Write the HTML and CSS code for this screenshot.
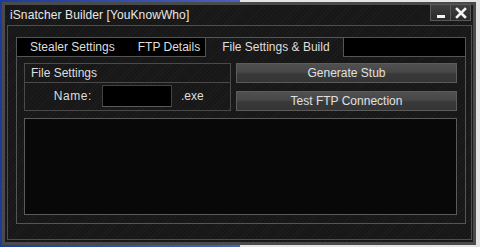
FILE: index.html
```html
<!DOCTYPE html>
<html lang="en">
<head>
  <meta charset="UTF-8" />
  <meta name="viewport" content="width=device-width, initial-scale=1.0"/>
  <title>iSnatcher Builder</title>
  <link rel="stylesheet" href="styles.css">
</head>
<body>
  <div class="window">
    <div class="titlebar">
      <span class="title">iSnatcher Builder [YouKnowWho]</span>
      <div class="controls">
        <button class="ctl" title="Minimize">
          <svg width="10" height="10" viewBox="0 0 10 10"><rect x="1" y="7" width="8" height="3" fill="#f2f2f2"/></svg>
        </button>
        <button class="ctl" title="Close">
          <svg width="12" height="12" viewBox="0 0 12 12"><path d="M2 2 L10 10 M10 2 L2 10" stroke="#f2f2f2" stroke-width="2.6" stroke-linecap="square"/></svg>
        </button>
      </div>
    </div>

    <div class="frame">
      <div class="tabs">
        <div class="tab-group">
          <span class="tab">Stealer Settings</span>
          <span class="tab">FTP Details</span>
        </div>
        <span class="tab active">File Settings &amp; Build</span>
        <div class="tab-fill"></div>
      </div>

      <div class="panel">
        <div class="top-row">
          <div class="group">
            <div class="group-title">File Settings</div>
            <div class="group-body">
              <label for="name">Name:</label>
              <input type="text" id="name" />
              <span class="ext">.exe</span>
            </div>
          </div>
          <div class="actions">
            <button class="btn">Generate Stub</button>
            <button class="btn">Test FTP Connection</button>
          </div>
        </div>
        <div class="log"></div>
      </div>
    </div>
  </div>
</body>
</html>
```

FILE: styles.css
```css
body {
  margin: 0;
  background: linear-gradient(to right, #1c3c9c 0, #4a62b8 50%, #e4e4e4 50%);
  font-family: "Liberation Sans", Arial, sans-serif;
  color: #dedede;
}
.window {
  margin: 2px 0 0 2px;
  width: 468px;
  height: 237px;
  border: 3px solid #4a4a4a;
  background: repeating-linear-gradient(135deg, #1d1d1d 0 1px, #171717 1px 3px);
  display: flex;
  flex-direction: column;
}
.titlebar {
  height: 20px;
  display: flex;
  justify-content: space-between;
  padding: 0 2px 0 5px;
}
.title {
  font-size: 12px;
  line-height: 20px;
  color: #e8e8e8;
  letter-spacing: 0.1px;
}
.controls {
  display: flex;
}
.ctl {
  width: 21px;
  height: 17px;
  padding: 0;
  margin-top: -1px;
  border: 1px solid #5a5a5a;
  background: linear-gradient(#3e3e3e, #2a2a2a);
  display: flex;
  align-items: center;
  justify-content: center;
}
.ctl + .ctl {
  margin-left: -1px;
}
.frame {
  flex: 1;
  margin: 0 1px 2px 2px;
  border: 1px solid #4e4e4e;
  padding: 11px 5px 15px 8px;
  display: flex;
  flex-direction: column;
}
.tabs {
  display: flex;
  height: 20px;
  font-size: 12px;
}
.tab-group {
  display: flex;
  gap: 23px;
  background: #000;
  border: 1px solid #555;
  border-right: none;
  padding: 0 5px 0 13px;
}
.tab {
  line-height: 18px;
  color: #dedede;
}
.tab.active {
  padding: 0 13px 0 16px;
  line-height: 19px;
  border-top: 1px solid #555;
  border-left: 1px solid #555;
}
.tab-fill {
  flex: 1;
  background: #000;
  border: 1px solid #555;
}
.panel {
  flex: 1;
  border: 1px solid #555;
  border-top: none;
  padding: 6px 8px 8px 7px;
  display: flex;
  flex-direction: column;
  gap: 7px;
}
.top-row {
  display: flex;
  gap: 5px;
}
.group {
  width: 205px;
  border: 1px solid #4a4a4a;
}
.group-title {
  height: 18px;
  line-height: 18px;
  padding-left: 6px;
  font-size: 12px;
  border-bottom: 1px solid #4a4a4a;
}
.group-body {
  display: flex;
  align-items: center;
  height: 26px;
  font-size: 12px;
}
.group-body label {
  width: 67px;
  text-align: right;
  margin-right: 10px;
  letter-spacing: 0.6px;
}
.group-body input {
  width: 68px;
  height: 20px;
  padding: 0;
  background: #000;
  border: 1px solid #444;
  border-bottom-color: #5a5a5a;
  color: #ddd;
}
.ext {
  margin-left: 9px;
}
.actions {
  flex: 1;
  display: flex;
  flex-direction: column;
  gap: 8px;
}
.btn {
  height: 20px;
  padding: 0;
  border: 1px solid #5c5c5c;
  background: linear-gradient(#505050 0, #474747 45%, #393939 55%, #353535 100%);
  color: #e0e0e0;
  font-family: "Liberation Sans", Arial, sans-serif;
  font-size: 12px;
}
.log {
  flex: 1;
  background: #080808;
  border: 1px solid #5a5a5a;
}
```
